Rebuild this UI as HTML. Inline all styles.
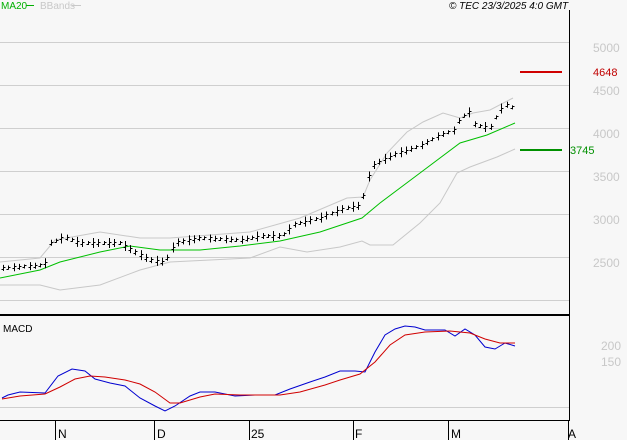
<!DOCTYPE html><html><head><style>body{margin:0;background:#f7f7f7}svg{display:block;font-family:"Liberation Sans",sans-serif}</style></head><body>
<svg id="s" width="627" height="440" xmlns="http://www.w3.org/2000/svg">
<rect width="627" height="440" fill="#f7f7f7"/>
<g stroke="#cfcfcf" stroke-width="1">
<line x1="0" y1="42.5" x2="569" y2="42.5"/><line x1="0" y1="85.5" x2="569" y2="85.5"/><line x1="0" y1="128.5" x2="569" y2="128.5"/><line x1="0" y1="171.5" x2="569" y2="171.5"/><line x1="0" y1="214.5" x2="569" y2="214.5"/><line x1="0" y1="257.5" x2="569" y2="257.5"/><line x1="0" y1="300.5" x2="569" y2="300.5"/><line x1="0" y1="407.5" x2="569" y2="407.5"/>
</g>
<g fill="#c8c8c8" font-size="12"><text x="593" y="52">5000</text><text x="593" y="95">4500</text><text x="593" y="138">4000</text><text x="593" y="181">3500</text><text x="593" y="224">3000</text><text x="593" y="267">2500</text><text x="601" y="350">200</text><text x="601" y="366">150</text></g>
<line x1="569.5" y1="10" x2="569.5" y2="421" stroke="#000"/>
<line x1="0" y1="315" x2="569" y2="315" stroke="#000" stroke-width="2"/>
<line x1="0" y1="420.5" x2="569" y2="420.5" stroke="#000"/>
<g stroke="#000"><line x1="55.5" y1="420" x2="55.5" y2="440"/><line x1="154.5" y1="420" x2="154.5" y2="440"/><line x1="249.5" y1="420" x2="249.5" y2="440"/><line x1="353.5" y1="420" x2="353.5" y2="440"/><line x1="448.5" y1="420" x2="448.5" y2="440"/><line x1="568.5" y1="420" x2="568.5" y2="440"/></g>
<g font-size="12" fill="#000"><text x="58" y="438">N</text><text x="157" y="438">D</text><text x="251" y="438">25</text><text x="355" y="438">F</text><text x="451" y="438">M</text><text x="568" y="438">A</text></g>
<text x="1" y="9" font-size="10" fill="#00b000">MA20</text><line x1="26" y1="5.5" x2="34" y2="5.5" stroke="#00b000"/>
<text x="40" y="9" font-size="10" fill="#c8c8c8">BBands</text><line x1="72" y1="5.5" x2="81" y2="5.5" stroke="#c8c8c8"/>
<text x="449" y="9" font-size="10" font-style="italic" fill="#000">© TEC 23/3/2025 4:0 GMT</text>
<line x1="520" y1="72" x2="562" y2="72" stroke="#d00000" stroke-width="2"/>
<text x="593" y="76" font-size="11" fill="#c00000">4648</text>
<line x1="520" y1="150" x2="562" y2="150" stroke="#009000" stroke-width="2"/>
<text x="570" y="154" font-size="11" fill="#009000">3745</text>
<polyline fill="none" stroke="#c8c8c8" points="0,262 40,258 55,240 100,232 140,238 170,238 250,232 300,218 347,198 363,197 370,180 387,153 407,132 423,122 443,113 460,118 473,113 490,110 513,98"/>
<polyline fill="none" stroke="#c8c8c8" points="0,285 40,285 60,290 100,285 140,270 170,262 250,258 280,247 307,252 340,247 362,241 370,245 393,245 420,223 440,203 457,173 470,167 497,157 515,149"/>
<polyline fill="none" stroke="#00c000" points="0,278 40,270 60,262 100,252 130,246 160,250 200,250 240,246 280,241 320,232 362,218 380,203 420,173 460,143 487,135 515,123"/>
<g id="bars" stroke="#000"></g>
<text x="3" y="332" font-size="10" fill="#000">MACD</text>
<polyline fill="none" stroke="#0000d0" points="2,398 8,395 20,392 45,393 58,376 72,369 85,371 95,379 110,383 125,386 140,398 155,406 165,411 175,406 190,396 200,392 215,392 235,396 255,395 275,395 290,389 310,382 325,377 340,371 355,371 365,372 375,352 385,335 395,329 405,326 415,327 425,330 435,330 445,330 455,336 465,329 475,335 485,347 495,349 505,343 515,346"/>
<polyline fill="none" stroke="#d00000" points="2,399 20,396 45,394 60,387 75,379 90,376 105,377 125,380 140,384 155,392 170,403 180,403 200,397 215,394 240,395 280,395 300,392 325,385 340,380 360,374 375,362 390,345 405,335 425,332 450,331 470,333 485,339 500,343 515,343"/>
</svg>
<script>
var p=[[2,268],[45,265],[50,243],[65,237],[80,243],[120,243],[135,252],[150,260],[165,262],[175,243],[200,238],[240,240],[260,236],[282,236],[295,224],[320,218],[345,208],[358,206],[364,195],[368,178],[374,165],[382,160],[398,153],[420,146],[440,135],[455,130],[460,118],[470,112],[475,125],[490,128],[500,110],[505,104],[513,108]];
function f(x){for(var i=1;i<p.length;i++)if(x<=p[i][0]){var a=p[i-1],b=p[i];return a[1]+(b[1]-a[1])*(x-a[0])/(b[0]-a[0]);}return p[p.length-1][1];}
var g=document.getElementById('bars'),h='';
for(var x=3;x<=513;x+=5.3){var y=f(x),r=2+((Math.round(x)*7)%4);var X=Math.round(x)+0.5;h+='<line x1="'+X+'" y1="'+(y-r)+'" x2="'+X+'" y2="'+(y+r)+'"/><line x1="'+(X-2)+'" y1="'+Math.round(y+1)+'.5" x2="'+X+'" y2="'+Math.round(y+1)+'.5"/><line x1="'+X+'" y1="'+Math.round(y-1)+'.5" x2="'+(X+2)+'" y2="'+Math.round(y-1)+'.5"/>';}
g.innerHTML=h;
</script>
</body></html>
